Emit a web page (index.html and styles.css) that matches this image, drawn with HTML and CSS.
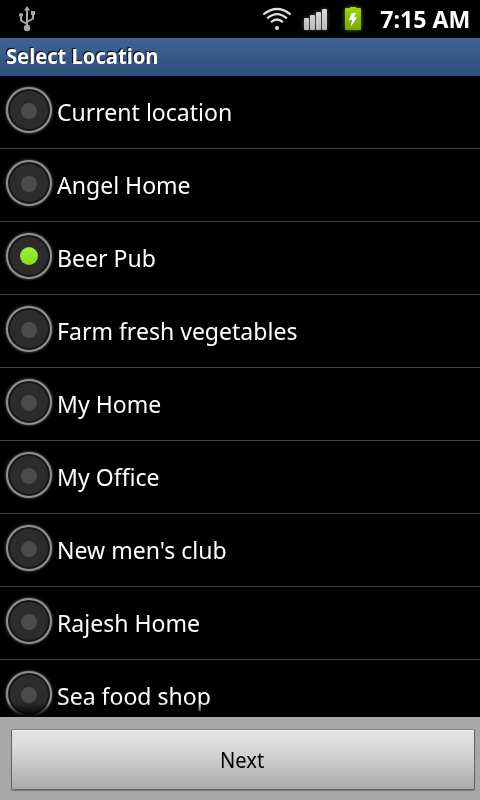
FILE: index.html
```html
<!DOCTYPE html>
<html lang="en">
<head>
    <meta charset="UTF-8">
    <meta name="viewport" content="width=device-width, initial-scale=1.0">
    <title>Select Location</title>
    <link rel="stylesheet" href="styles.css">
</head>
<body>
    <!-- Status bar -->
    <div class="status-bar">
        <svg class="usb-icon" width="18" height="26" viewBox="0 0 18 26">
            <g fill="none" stroke="#a8a8a8" stroke-width="2">
                <path d="M9 4V22M9 18L3 14.500V9M9 16L15 12.500V7"/>
            </g>
            <path fill="#a8a8a8" d="M9 0L12 4.500H6ZM13 5H17V9H13Z"/>
            <circle fill="#a8a8a8" cx="3" cy="9" r="2.100"/>
            <circle fill="#a8a8a8" cx="9" cy="22" r="3.200"/>
        </svg>
        <div class="status-right">
            <svg class="wifi-icon" width="30" height="24" viewBox="0 0 30 24">
                <g fill="none" stroke="#dedede" stroke-width="2.200">
                    <path d="M1.300 7.500Q15 -3.500 28.700 7.500"/>
                    <path d="M5.200 11.300Q15 2.800 24.800 11.300"/>
                    <path d="M9 15.200Q15 9.800 21 15.200"/>
                </g>
                <circle fill="#dedede" cx="15" cy="21" r="2"/>
            </svg>
            <svg class="signal-icon" width="24" height="22" viewBox="0 0 24 22">
                <defs>
                    <linearGradient id="bars" x1="0" y1="0" x2="0" y2="22" gradientUnits="userSpaceOnUse">
                        <stop offset="0" stop-color="#dcdcdc"/>
                        <stop offset="1" stop-color="#b8b8b8"/>
                    </linearGradient>
                </defs>
                <g fill="url(#bars)">
                    <rect x="0" y="9" width="5" height="12" rx=".8"/>
                    <rect x="6" y="6" width="5" height="15" rx=".8"/>
                    <rect x="12" y="3" width="5" height="18" rx=".8"/>
                    <rect x="18" y="0" width="5" height="21" rx=".8"/>
                </g>
            </svg>
            <svg class="battery-icon" width="16" height="23" viewBox="0 0 16 23">
                <defs>
                    <linearGradient id="charge" x1="0" y1="0" x2="0" y2="1">
                        <stop offset="0" stop-color="#9bd904"/>
                        <stop offset="1" stop-color="#76a900"/>
                    </linearGradient>
                </defs>
                <path fill="url(#charge)" d="M5 0H11V1H15Q16 1 16 2V22Q16 23 15 23H1Q0 23 0 22V2Q0 1 1 1H5Z"/>
                <path fill="#fff" d="M6.500 6H11L9.200 10.300H12.300L5.500 20L7.200 13H4Z"/>
            </svg>
            <span class="clock">7:15 AM</span>
        </div>
    </div>

    <h1 class="title-bar"><span class="title-text">Select Location</span></h1>

    <!-- Locations -->
    <ul class="location-list">
        <li class="location"><span class="radio"></span><span class="name">Current location</span></li>
        <li class="location"><span class="radio"></span><span class="name">Angel Home</span></li>
        <li class="location selected"><span class="radio"></span><span class="name">Beer Pub</span></li>
        <li class="location"><span class="radio"></span><span class="name">Farm fresh vegetables</span></li>
        <li class="location"><span class="radio"></span><span class="name">My Home</span></li>
        <li class="location"><span class="radio"></span><span class="name">My Office</span></li>
        <li class="location"><span class="radio"></span><span class="name">New men's club</span></li>
        <li class="location"><span class="radio"></span><span class="name">Rajesh Home</span></li>
        <li class="location"><span class="radio"></span><span class="name">Sea food shop</span></li>
    </ul>

    <div class="footer">
        <button class="next-btn"><span class="next-text">Next</span></button>
    </div>
</body>
</html>
```
FILE: styles.css
```css
* {
    margin: 0;
    padding: 0;
    box-sizing: border-box;
}

body {
    display: flex;
    flex-direction: column;
    height: 100vh;
    overflow: hidden;
    background: #000;
    color: #fff;
    font-family: "Noto Sans", "Open Sans", sans-serif;
}

/* Slightly condensed lettering */
.title-text,
.name,
.next-text {
    display: inline-block;
    transform: scaleX(0.96);
    transform-origin: left;
}

/* Status bar */
.status-bar {
    display: flex;
    justify-content: space-between;
    flex: 0 0 38px;
    padding: 0 10px 0 18px;
}

.usb-icon {
    margin-top: 6px;
}

.status-right {
    display: flex;
    align-items: flex-start;
}

.wifi-icon {
    margin: 7px 12px 0 0;
}

.signal-icon {
    margin: 9px 17px 0 0;
    filter: drop-shadow(0 0 2px rgba(255, 255, 255, 0.3));
}

.battery-icon {
    margin: 7px 16px 0 0;
    filter: drop-shadow(0 0 2px rgba(140, 210, 0, 0.6));
}

.clock {
    font-size: 24px;
    font-weight: 700;
    line-height: 38px;
    white-space: nowrap;
    transform: scaleX(0.965);
    transform-origin: right;
}

.title-bar {
    flex: 0 0 38px;
    padding-left: 6px;
    background: linear-gradient(#41658f, #36598a 45%, #2f4f7b);
    font-size: 21px;
    font-weight: 700;
    line-height: 37px;
    text-shadow: -1px -1px 1px #000;
}

/* Location list */
.location-list {
    position: relative;
    flex: 1;
    overflow: hidden;
    list-style: none;
}

/* Fade over the cut-off last row */
.location-list::after {
    content: "";
    position: absolute;
    left: 0;
    right: 0;
    bottom: 0;
    height: 15px;
    background: linear-gradient(transparent, #000);
}

.location {
    display: flex;
    align-items: flex-start;
    height: 73px;
    padding: 11px 0 0 6px;
    border-bottom: 1px solid #414141;
}

.radio {
    display: flex;
    align-items: center;
    justify-content: center;
    width: 46px;
    height: 46px;
    border: 2px solid #8f8f8f;
    border-radius: 50%;
    background: #2c2c2c;
    box-shadow: 0 0 3px #777, inset 0 0 0 2px #171717;
}

.radio::before {
    content: "";
    width: 16px;
    height: 16px;
    margin-top: 1px;
    border-radius: 50%;
    background: #4b4b4b;
}

.selected .radio::before {
    width: 18px;
    height: 18px;
    margin-top: 0;
    background: linear-gradient(#a2ee3b, #86d91d);
}

.name {
    margin-left: 5px;
    font-size: 24px;
    line-height: 49px;
}

/* Bottom bar */
.footer {
    flex: 0 0 83px;
    padding: 12px 5px 10px 11px;
    background: #a9a9a9;
}

.next-btn {
    display: block;
    width: 100%;
    height: 61px;
    border: 1px solid #666;
    border-top-color: #858585;
    border-radius: 2px;
    background: linear-gradient(#e3e3e3, #dadada 30%, #a9a9a9);
    box-shadow: 0 1px 1px rgba(0, 0, 0, 0.3), inset 0 1px 0 #efefef;
    color: #000;
    font-family: inherit;
    font-size: 21px;
}
```
